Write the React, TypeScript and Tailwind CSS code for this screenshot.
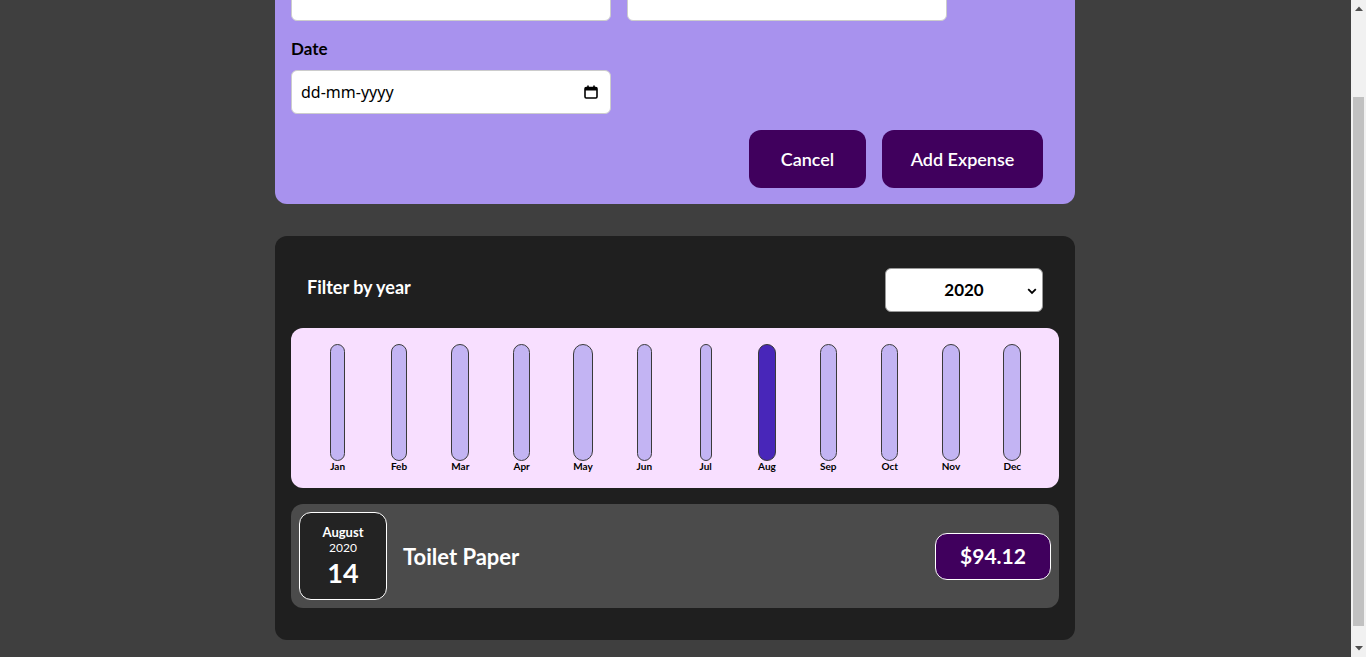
import React from "react";

const months = ["Jan","Feb","Mar","Apr","May","Jun","Jul","Aug","Sep","Oct","Nov","Dec"];

function CalendarIcon() {
  return (
    <svg width="14" height="14" viewBox="0 0 14 14" aria-hidden="true">
      <rect x="1" y="2.5" width="12" height="10.5" rx="1.2" fill="none" stroke="#000" strokeWidth="1.6" />
      <rect x="1" y="2.5" width="12" height="3" fill="#000" />
      <rect x="3.2" y="0.5" width="1.6" height="3" fill="#000" />
      <rect x="9.2" y="0.5" width="1.6" height="3" fill="#000" />
    </svg>
  );
}

function Control({ label, children }: { label?: string; children?: React.ReactNode }) {
  return (
    <div className="w-[320px]">
      <div className="mb-[9px] h-6 text-[17px] font-bold leading-6 text-black">{label}</div>
      <div className="flex h-[44px] w-full items-center justify-between rounded-[6px] border border-[#cccccc] bg-white px-[9px]">
        {children}
      </div>
    </div>
  );
}

export default function App() {
  return (
    <div
      className="flex h-[657px] w-[1366px] overflow-hidden bg-[#3f3f3f]"
      style={{ fontFamily: "Lato, 'Noto Sans', sans-serif" }}
    >
      <div className="flex-1 overflow-hidden pr-px">
        <div className="mx-auto -mt-[72px] flex w-[800px] flex-col gap-8">
          {/* Form card */}
          <div className="rounded-xl bg-[#a892ee] p-4">
            <div className="flex flex-wrap gap-4">
              <Control />
              <Control />
              <Control label="Date">
                <span className="text-[16px] text-black" style={{ fontFamily: "'Noto Sans', sans-serif" }}>
                  dd-mm-yyyy
                </span>
                <span className="mr-[3px] flex items-center">
                  <CalendarIcon />
                </span>
              </Control>
            </div>
            <div className="mt-4 flex justify-end gap-4 pr-4">
              <button className="h-[58px] w-[117px] rounded-xl bg-[#40005d] text-[18px] font-semibold text-white">
                Cancel
              </button>
              <button className="h-[58px] w-[161px] rounded-xl bg-[#40005d] text-[18px] font-semibold text-white">
                Add Expense
              </button>
            </div>
          </div>

          {/* Expenses card */}
          <div className="rounded-xl bg-[#1f1f1f] p-4 pb-8">
            <div className="mb-4 flex items-center justify-between px-4 pt-4">
              <div className="pb-[6px] text-[18px] font-bold text-white">Filter by year</div>
              <div className="relative flex h-[44px] w-[158px] items-center justify-center rounded-[6px] border border-[#999] bg-white">
                <span className="text-[17px] font-bold text-black">2020</span>
                <svg className="absolute right-[5px] top-[19px]" width="10" height="7" viewBox="0 0 10 7" aria-hidden="true">
                  <path d="M1.2 1.2 L5 5 L8.8 1.2" fill="none" stroke="#000" strokeWidth="1.8" />
                </svg>
              </div>
            </div>

            <div className="grid grid-cols-12 rounded-xl bg-[#f8dfff] p-4">
              {months.map((m) => (
                <div key={m} className="flex justify-center">
                  <div className="flex w-fit flex-col items-stretch">
                    <div
                      className={
                        m === "Aug"
                          ? "h-[117px] w-full rounded-full border border-[#3a3a3a] bg-[#4826b9]"
                          : "h-[117px] w-full rounded-full border border-[#3a3a3a] bg-[#c3b4f3]"
                      }
                    />
                    <div className="text-center text-[10px] font-bold leading-[11px] text-[#000]">{m}</div>
                  </div>
                </div>
              ))}
            </div>

            <div className="mt-4 flex items-center rounded-xl bg-[#4b4b4b] p-2">
              <div className="flex h-[88px] w-[88px] flex-col items-center justify-center rounded-xl border border-white bg-[#232323] pt-[2px] text-white">
                <div className="text-[13px] font-bold leading-[16px]">August</div>
                <div className="text-[12px] leading-[16px]">2020</div>
                <div className="text-[27px] font-bold leading-[34px]">14</div>
              </div>
              <div className="ml-4 flex-1 text-[22px] font-bold text-white">Toilet Paper</div>
              <div className="flex h-[47px] w-[116px] items-center justify-center rounded-xl border border-white bg-[#40005d] text-[21px] font-bold text-white">
                $94.12
              </div>
            </div>
          </div>
        </div>
      </div>

      {/* Scrollbar */}
      <div className="flex h-[657px] w-[15px] flex-col bg-[#f1f1f1]">
        <div className="flex h-[17px] items-center justify-center">
          <svg width="8" height="5" viewBox="0 0 8 5" aria-hidden="true">
            <path d="M0 5 L4 0.5 L8 5 Z" fill="#505050" />
          </svg>
        </div>
        <div className="h-[80px]" />
        <div className="mx-[2px] h-[529px] bg-[#c1c1c1]" />
        <div className="flex-1" />
        <div className="flex h-[17px] items-center justify-center">
          <svg width="8" height="5" viewBox="0 0 8 5" aria-hidden="true">
            <path d="M0 0 L8 0 L4 4.5 Z" fill="#505050" />
          </svg>
        </div>
      </div>
    </div>
  );
}
